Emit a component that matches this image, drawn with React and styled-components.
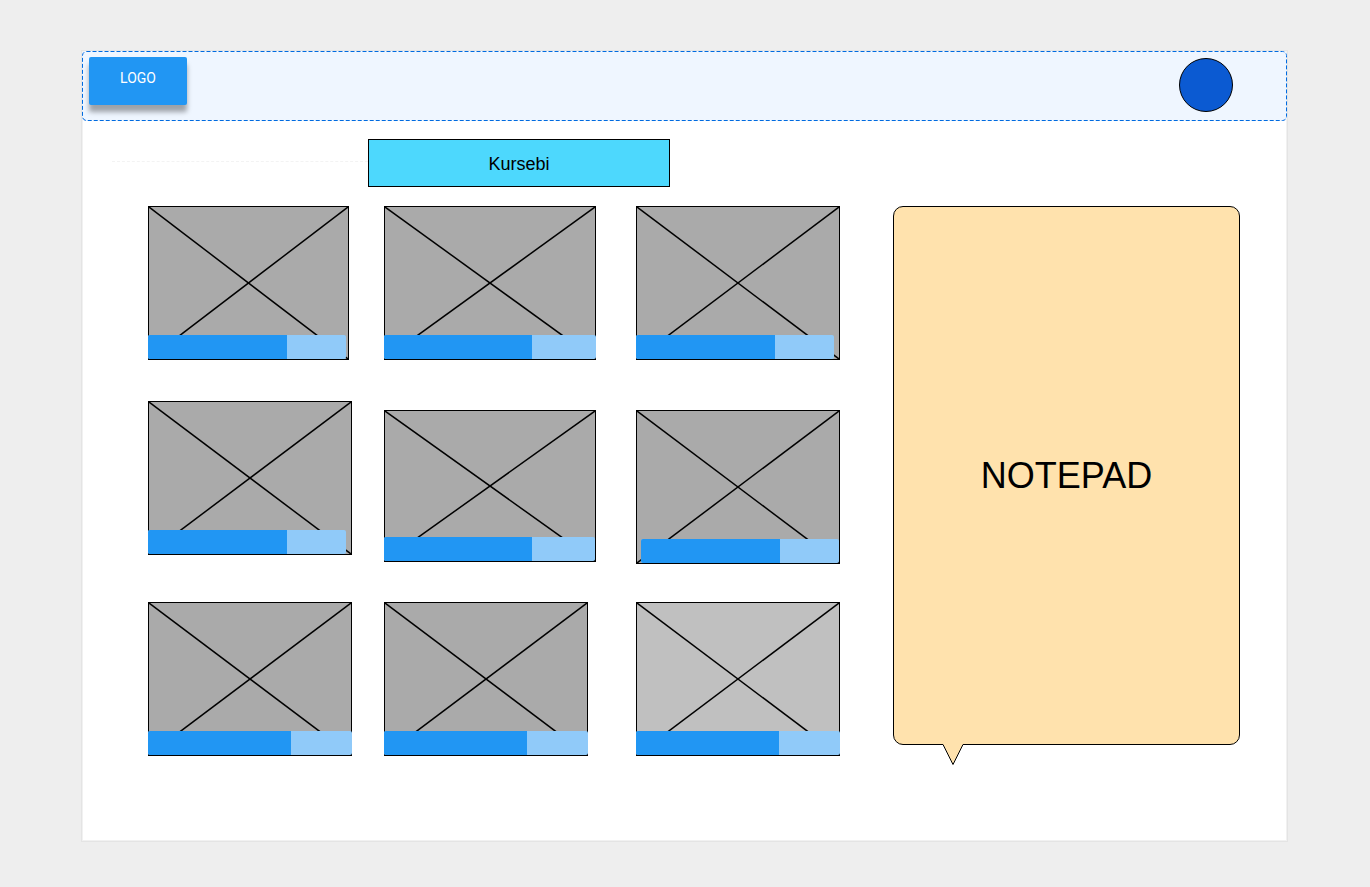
import React from "react";
import styled, { createGlobalStyle } from "styled-components";

const GlobalStyle = createGlobalStyle`
  *, *::before, *::after { box-sizing: border-box; }
  body {
    margin: 0;
    background: #eeeeee;
    color: #000;
    font-family: "Liberation Sans", Arial, sans-serif;
  }
`;

const Page = styled.div`
  padding: 51px 83px 46px 82px;
`;

const Sheet = styled.div`
  background: #fff;
  box-shadow: 0 0 0 1px #e4e4e4, inset 0 0 0 1px #f1f1f1;
`;

const Header = styled.header`
  position: relative;
  display: flex;
  align-items: flex-start;
  justify-content: space-between;
  height: 70px;
  padding: 6px 54px 0 7px;
  background: #eff6ff;
  border-radius: 4px;
`;

const Outline = styled.svg`
  position: absolute;
  inset: 0;
  width: 100%;
  height: 100%;
  pointer-events: none;

  rect {
    width: calc(100% - 1px);
    height: calc(100% - 1px);
    fill: none;
    stroke: #006be0;
    stroke-dasharray: 4 2;
  }
`;

const LogoButton = styled.button`
  width: 98px;
  height: 48px;
  padding: 0 0 6px;
  border: 0;
  border-radius: 2px;
  background: #2196f3;
  box-shadow: 0 7px 5px rgba(0, 0, 0, 0.34);
  color: #fff;
  font: 400 14px/20px Roboto, sans-serif;
`;

const Avatar = styled.button`
  width: 54px;
  height: 54px;
  margin-top: 1px;
  padding: 0;
  border: 1px solid #000;
  border-radius: 50%;
  background: #0b5ad2;
`;

const TitleRow = styled.div`
  display: grid;
  grid-template-columns: 256fr 302fr 617fr;
  align-items: start;
  padding: 18px 0 19px 30px;
`;

const Guide = styled.div`
  height: 23px;
  border-bottom: 1px dashed #f3f3f3;
`;

const Title = styled.h1`
  height: 48px;
  margin: 0;
  border: 1px solid #000;
  background: #4dd8fd;
  font-size: 18px;
  font-weight: 400;
  line-height: 48px;
  text-align: center;
`;

const Board = styled.main`
  display: grid;
  grid-template-columns: minmax(0, 692fr) minmax(0, 347fr);
  column-gap: 53px;
  align-items: start;
  padding: 0 47px 85px 66px;
`;

const Courses = styled.section`
  display: grid;
  grid-template-columns: 236fr 252fr 204fr;
  grid-template-rows: 195px 201px auto;
  align-items: start;
`;

const Card = styled.article`
  position: relative;
  display: flex;
  flex-direction: column;
  justify-content: flex-end;
  align-items: ${(p) => (p.$barEnd ? "flex-end" : "flex-start")};
  width: ${(p) => p.$width}px;
  height: ${(p) => p.$height}px;
  margin-top: ${(p) => (p.$lowered ? 9 : 0)}px;
  border: 1px solid #000;
  background: ${(p) => (p.$pale ? "#c0c0c0" : "#aaaaaa")};
`;

const Cross = styled.svg`
  position: absolute;
  inset: 0;
  width: 100%;
  height: 100%;
  stroke: #000;
  stroke-width: 1.5;
`;

const Progress = styled.progress`
  appearance: none;
  position: relative;
  display: block;
  width: ${(p) => p.$width}px;
  height: 24px;
  margin-left: -1px;
  border: 0;
  border-radius: 2px;
  overflow: hidden;
  background: #90caf9;

  &::-webkit-progress-bar { background: #90caf9; }
  &::-webkit-progress-value { background: #2196f3; }
  &::-moz-progress-bar { background: #2196f3; }
`;

const Notepad = styled.aside`
  position: relative;
  display: flex;
  align-items: center;
  justify-content: center;
  height: 539px;
  border: 1px solid #000;
  border-radius: 10px;
  background: #ffe2ad;
`;

const NotepadTitle = styled.h2`
  margin: 0;
  font-size: 36px;
  font-weight: 400;
  line-height: 43px;
`;

const Tail = styled.svg`
  position: absolute;
  top: 100%;
  left: 48px;
  margin-top: -1px;
`;

const courses = [
  { width: 201, height: 154, bar: 198 },
  { width: 212, height: 154, bar: 212 },
  { width: 204, height: 154, bar: 198 },
  { width: 204, height: 154, bar: 198 },
  { width: 212, height: 152, bar: 211, lowered: true },
  { width: 204, height: 154, bar: 198, lowered: true, barEnd: true },
  { width: 204, height: 154, bar: 204 },
  { width: 204, height: 154, bar: 204 },
  { width: 204, height: 154, bar: 204, pale: true },
];

function CourseCard({ course, label }) {
  return (
    <Card
      $width={course.width}
      $height={course.height}
      $lowered={course.lowered}
      $pale={course.pale}
      $barEnd={course.barEnd}
    >
      <Cross aria-hidden="true">
        <line x1="0" y1="0" x2="100%" y2="100%" />
        <line x1="100%" y1="0" x2="0" y2="100%" />
      </Cross>
      <Progress $width={course.bar} value={70} max={100} aria-label={label} />
    </Card>
  );
}

export default function App() {
  return (
    <>
      <GlobalStyle />
      <Page>
        <Sheet>
          <Header>
            <LogoButton type="button">LOGO</LogoButton>
            <Avatar type="button" aria-label="Profile" />
            <Outline aria-hidden="true">
              <rect x="0.5" y="0.5" rx="4" />
            </Outline>
          </Header>
          <TitleRow>
            <Guide />
            <Title>Kursebi</Title>
          </TitleRow>
          <Board>
            <Courses>
              {courses.map((course, i) => (
                <CourseCard key={i} course={course} label={`Course ${i + 1}`} />
              ))}
            </Courses>
            <Notepad>
              <NotepadTitle>NOTEPAD</NotepadTitle>
              <Tail width="22" height="23" viewBox="0 0 22 23" aria-hidden="true">
                <path d="M1 0H21V1.5L11 21.5L1 1.5Z" fill="#ffe2ad" />
                <path d="M1 1.5L11 21.5L21 1.5" fill="none" stroke="#000" />
              </Tail>
            </Notepad>
          </Board>
        </Sheet>
      </Page>
    </>
  );
}
